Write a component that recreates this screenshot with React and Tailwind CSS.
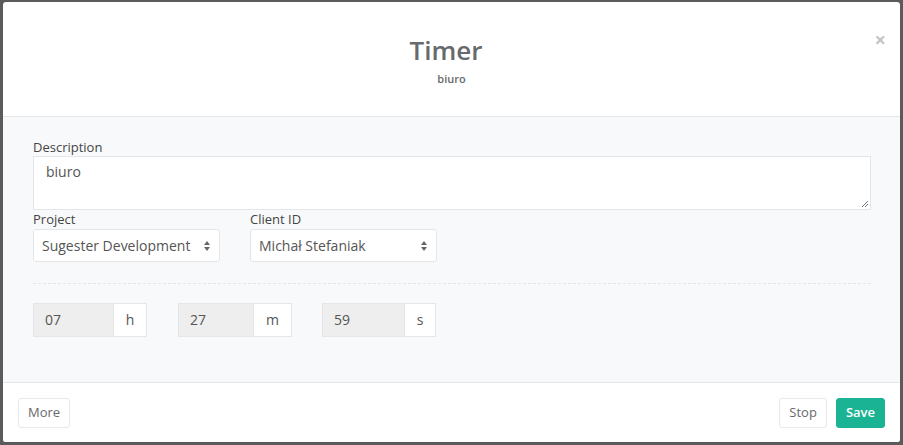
import React from "react";

const font = { fontFamily: '"Open Sans", "Liberation Sans", sans-serif' };

const Arrows = () => (
  <svg width="8" height="12" viewBox="0 0 8 12" className="absolute right-[8px] top-[10px]">
    <path d="M4 1 L7 5 L1 5 Z" fill="#666" />
    <path d="M4 11 L7 7 L1 7 Z" fill="#666" />
  </svg>
);

const SelectBox = ({ label, value }) => (
  <div className="w-[187px]">
    <div className="h-[18px] text-[13px] leading-[18px] text-[#444]">{label}</div>
    <div className="relative mt-px h-[33px] rounded-[3px] border border-[#e5e6e7] bg-white pl-[8px] text-[14px] leading-[31px] text-[#555]">
      {value}
      <Arrows />
    </div>
  </div>
);

const TimeInput = ({ value, unit, grayW }) => (
  <div className="flex h-[34px] w-[114px] border border-[#e5e6e7] text-[14px] text-[#555]">
    <div className={`${grayW} h-full bg-[#eeeeee] pl-[11px] leading-[32px]`}>{value}</div>
    <div className="flex-1 border-l border-[#e5e6e7] bg-white text-center leading-[32px]">{unit}</div>
  </div>
);

export default function App() {
  return (
    <div className="h-[445px] w-[903px] overflow-hidden bg-[#5b5b5b] pl-[3px] pt-[2px]" style={font}>
      <div className="flex h-[440px] w-[897px] flex-col overflow-hidden rounded-[3px] bg-white">
        {/* header */}
        <div className="relative h-[115px] border-b border-[#e5e6e7] pt-[30px] text-center">
          <div className="pr-[11px] text-[26px] font-semibold leading-[36px] text-[#676a6c]">Timer</div>
          <div className="mt-[4px] text-[11px] font-semibold leading-[14px] text-[#676a6c]">biuro</div>
          <div className="absolute right-[14px] top-[28px] text-[20px] font-bold leading-[20px] text-[#c4c4c4]">×</div>
        </div>

        {/* body */}
        <div className="h-[265px] bg-[#f8f9fa] px-[30px] pt-[21px]">
          <div className="h-[18px] text-[13px] leading-[18px] text-[#444]">Description</div>
          <div className="relative h-[54px] w-[838px] border border-[#e5e6e7] bg-white px-[12px] pt-[5px] text-[14px] leading-[20px] text-[#555]">
            biuro
            <svg width="8" height="8" viewBox="0 0 8 8" className="absolute bottom-[1px] right-[1px]">
              <path d="M7 1 L1 7 M7 4 L4 7" stroke="#777" strokeWidth="1" />
            </svg>
          </div>
          <div className="flex gap-[30px]">
            <SelectBox label="Project" value="Sugester Development" />
            <SelectBox label="Client ID" value="Michał Stefaniak" />
          </div>
          <div className="mt-[21px] w-[838px] border-t border-dashed border-[#e2e4e6]" />
          <div className="mt-[19px] flex">
            <TimeInput value="07" unit="h" grayW="w-[79px]" />
            <div className="w-[31px]" />
            <TimeInput value="27" unit="m" grayW="w-[74px]" />
            <div className="w-[30px]" />
            <TimeInput value="59" unit="s" grayW="w-[81px]" />
          </div>
        </div>

        {/* footer */}
        <div className="flex flex-1 items-start border-t border-[#e5e6e7] bg-white px-[15px] pt-[15px]">
          <button className="h-[30px] rounded-[3px] border border-[#e7eaec] bg-white px-[9px] text-[13px] text-[#676a6c]">More</button>
          <div className="flex-1" />
          <button className="h-[30px] rounded-[3px] border border-[#e7eaec] bg-white px-[9px] text-[13px] text-[#676a6c]">Stop</button>
          <button className="ml-[9px] h-[30px] rounded-[3px] border border-[#1ab394] bg-[#1ab394] px-[9px] text-[13px] font-semibold text-white">Save</button>
        </div>
      </div>
    </div>
  );
}
